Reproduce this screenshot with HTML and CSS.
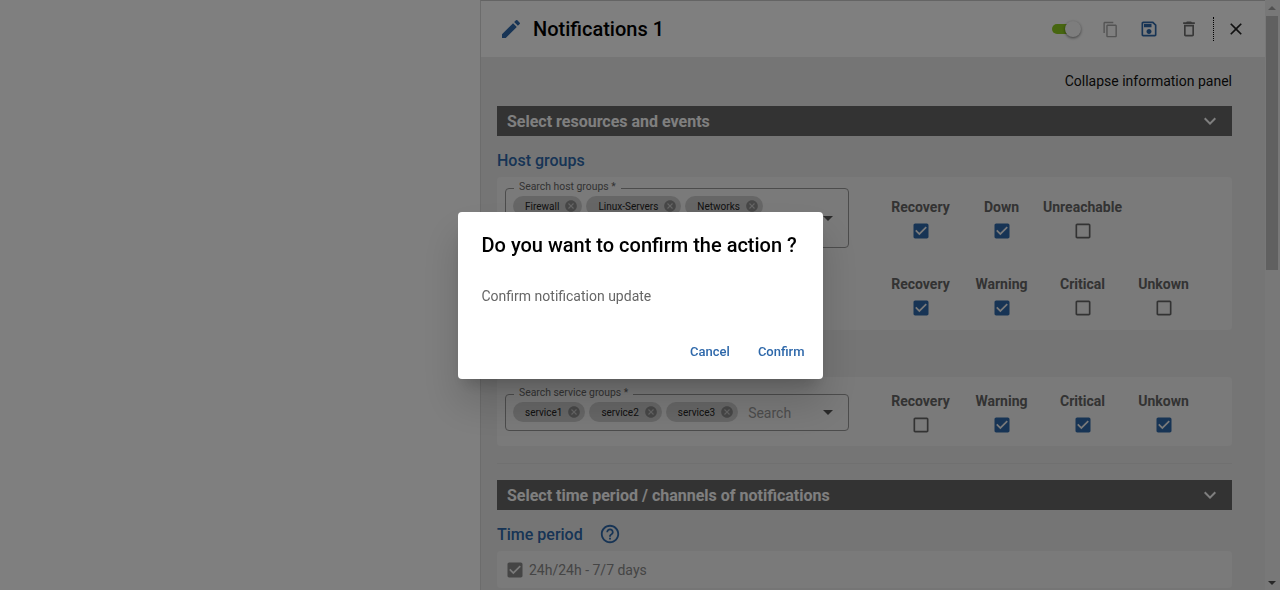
FILE: index.html
```html
<!DOCTYPE html>
<html lang="en">
<head>
    <meta charset="UTF-8">
    <meta name="viewport" content="width=device-width, initial-scale=1.0">
    <title>Notifications</title>
    <link rel="stylesheet" href="styles.css">
</head>
<body>
    <svg class="icon-defs" aria-hidden="true">
        <symbol id="i-edit" viewBox="0 0 24 24"><path d="M3 17.25V21h3.75L17.81 9.94l-3.75-3.75L3 17.25zM20.71 7.04a1 1 0 0 0 0-1.41l-2.34-2.34a1 1 0 0 0-1.41 0l-1.83 1.83 3.75 3.75 1.83-1.83z"/></symbol>
        <symbol id="i-copy" viewBox="0 0 24 24"><path d="M16 1H4c-1.1 0-2 .9-2 2v14h2V3h12V1zm3 4H8c-1.1 0-2 .9-2 2v14c0 1.1.9 2 2 2h11c1.1 0 2-.9 2-2V7c0-1.1-.9-2-2-2zm0 16H8V7h11v14z"/></symbol>
        <symbol id="i-save" viewBox="0 0 24 24"><path d="M17 3H5c-1.11 0-2 .9-2 2v14c0 1.1.89 2 2 2h14c1.1 0 2-.9 2-2V7l-4-4zm2 16H5V5h11.17L19 7.83V19zm-7-7c-1.66 0-3 1.34-3 3s1.34 3 3 3 3-1.34 3-3-1.34-3-3-3zM6 6h9v4H6z"/></symbol>
        <symbol id="i-delete" viewBox="0 0 24 24"><path d="M6 19c0 1.1.9 2 2 2h8c1.1 0 2-.9 2-2V7H6v12zM8 9h8v10H8V9zm7.5-5l-1-1h-5l-1 1H5v2h14V4z"/></symbol>
        <symbol id="i-close" viewBox="0 0 24 24"><path d="M19 6.41L17.59 5 12 10.59 6.41 5 5 6.41 10.59 12 5 17.59 6.41 19 12 13.41 17.59 19 19 17.59 13.41 12z"/></symbol>
        <symbol id="i-chevron" viewBox="0 0 24 24"><path d="M7.41 8.59L12 13.17l4.59-4.58L18 10l-6 6-6-6 1.41-1.41z"/></symbol>
        <symbol id="i-help" viewBox="0 0 24 24"><path d="M11 18h2v-2h-2v2zm1-16C6.48 2 2 6.48 2 12s4.48 10 10 10 10-4.48 10-10S17.52 2 12 2zm0 18c-4.41 0-8-3.59-8-8s3.59-8 8-8 8 3.59 8 8-3.59 8-8 8zm0-14c-2.21 0-4 1.79-4 4h2c0-1.1.9-2 2-2s2 .9 2 2c0 2-3 1.75-3 5h2c0-2.25 3-2.5 3-5 0-2.21-1.79-4-4-4z"/></symbol>
        <symbol id="i-checked" viewBox="0 0 24 24"><path d="M19 3H5c-1.11 0-2 .9-2 2v14c0 1.1.89 2 2 2h14c1.11 0 2-.9 2-2V5c0-1.1-.89-2-2-2zm-9 14l-5-5 1.41-1.41L10 14.17l7.59-7.59L19 8l-9 9z"/></symbol>
        <symbol id="i-blank" viewBox="0 0 24 24"><path d="M19 5v14H5V5h14m0-2H5c-1.1 0-2 .9-2 2v14c0 1.1.9 2 2 2h14c1.1 0 2-.9 2-2V5c0-1.1-.9-2-2-2z"/></symbol>
        <symbol id="i-cancel" viewBox="0 0 24 24"><path d="M12 2C6.47 2 2 6.47 2 12s4.47 10 10 10 10-4.47 10-10S17.53 2 12 2zm5 13.59L15.59 17 12 13.41 8.41 17 7 15.59 10.59 12 7 8.41 8.41 7 12 10.59 15.59 7 17 8.41 13.41 12 17 15.59z"/></symbol>
    </svg>

    <div class="page">
        <div class="left-space"></div>
        <div class="panel">
            <header class="panel-header">
                <svg class="icon title-icon"><use href="#i-edit"/></svg>
                <h1 class="panel-title">Notifications 1</h1>
                <div class="switch"><span class="switch-track"></span><span class="switch-thumb"></span></div>
                <svg class="icon action copy"><use href="#i-copy"/></svg>
                <svg class="icon action save"><use href="#i-save"/></svg>
                <svg class="icon action trash"><use href="#i-delete"/></svg>
                <span class="divider"></span>
                <svg class="icon close"><use href="#i-close"/></svg>
            </header>

            <div class="panel-body">
                <p class="collapse-link">Collapse information panel</p>

                <div class="section-bar">
                    <span>Select resources and events</span>
                    <svg class="icon chevron"><use href="#i-chevron"/></svg>
                </div>

                <h2 class="group-title">Host groups</h2>
                <div class="card card-hosts">
                    <div class="field field-tall">
                        <span class="field-legend">Search host groups *</span>
                        <div class="chips">
                            <span class="chip">Firewall<svg class="chip-x"><use href="#i-cancel"/></svg></span>
                            <span class="chip">Linux-Servers<svg class="chip-x"><use href="#i-cancel"/></svg></span>
                            <span class="chip">Networks<svg class="chip-x"><use href="#i-cancel"/></svg></span>
                        </div>
                        <span class="caret"></span>
                    </div>
                    <div class="events">
                        <div class="event-grid first-row">
                            <div class="event"><span>Recovery</span><svg class="check on"><use href="#i-checked"/></svg></div>
                            <div class="event"><span>Down</span><svg class="check on"><use href="#i-checked"/></svg></div>
                            <div class="event"><span>Unreachable</span><svg class="check"><use href="#i-blank"/></svg></div>
                        </div>
                        <div class="event-grid">
                            <div class="event"><span>Recovery</span><svg class="check on"><use href="#i-checked"/></svg></div>
                            <div class="event"><span>Warning</span><svg class="check on"><use href="#i-checked"/></svg></div>
                            <div class="event"><span>Critical</span><svg class="check"><use href="#i-blank"/></svg></div>
                            <div class="event"><span>Unkown</span><svg class="check"><use href="#i-blank"/></svg></div>
                        </div>
                    </div>
                </div>

                <h2 class="group-title service-title">Service groups</h2>
                <div class="card card-services">
                    <div class="field">
                        <span class="field-legend">Search service groups *</span>
                        <div class="chips">
                            <span class="chip">service1<svg class="chip-x"><use href="#i-cancel"/></svg></span>
                            <span class="chip">service2<svg class="chip-x"><use href="#i-cancel"/></svg></span>
                            <span class="chip">service3<svg class="chip-x"><use href="#i-cancel"/></svg></span>
                            <span class="field-placeholder">Search</span>
                        </div>
                        <span class="caret"></span>
                    </div>
                    <div class="events">
                        <div class="event-grid">
                            <div class="event"><span>Recovery</span><svg class="check"><use href="#i-blank"/></svg></div>
                            <div class="event"><span>Warning</span><svg class="check on"><use href="#i-checked"/></svg></div>
                            <div class="event"><span>Critical</span><svg class="check on"><use href="#i-checked"/></svg></div>
                            <div class="event"><span>Unkown</span><svg class="check on"><use href="#i-checked"/></svg></div>
                        </div>
                    </div>
                </div>

                <hr class="rule">

                <div class="section-bar">
                    <span>Select time period / channels of notifications</span>
                    <svg class="icon chevron"><use href="#i-chevron"/></svg>
                </div>

                <h2 class="group-title">Time period <svg class="icon help"><use href="#i-help"/></svg></h2>
                <div class="card card-time">
                    <svg class="check grey"><use href="#i-checked"/></svg>
                    <span>24h/24h - 7/7 days</span>
                </div>
            </div>
        </div>
        <div class="scrollbar">
            <span class="arrow-up"></span>
            <span class="scroll-thumb"></span>
            <span class="arrow-down"></span>
        </div>
    </div>

    <div class="backdrop">
        <div class="dialog">
            <h3 class="dialog-title">Do you want to confirm the action ?</h3>
            <p class="dialog-text">Confirm notification update</p>
            <div class="dialog-actions">
                <button type="button">Cancel</button>
                <button type="button">Confirm</button>
            </div>
        </div>
    </div>
</body>
</html>
```
FILE: styles.css
```css
* {
    box-sizing: border-box;
}

body {
    margin: 0;
    height: 590px;
    overflow: hidden;
    font-family: Roboto, "Liberation Sans", sans-serif;
    background-color: #fff;
}

.icon-defs {
    display: none;
}

.page {
    display: flex;
    height: 590px;
}

.left-space {
    width: 480px;
    flex: none;
}

.panel {
    flex: 1;
    min-width: 0;
    border-left: 1px solid #d8d8d8;
    border-top: 1px solid #c8c8c8;
    overflow: hidden;
    background-color: #ebebeb;
}

.panel-header {
    display: flex;
    align-items: center;
    height: 56px;
    padding-left: 18px;
    background-color: #fff;
}

.icon {
    width: 24px;
    height: 24px;
    flex: none;
    fill: currentColor;
}

.title-icon {
    color: #2e68aa;
}

.panel-title {
    flex: 1;
    margin: 0 0 0 10px;
    font-size: 20px;
    font-weight: 500;
    color: #000;
}

.switch {
    position: relative;
    width: 30px;
    height: 16px;
    flex: none;
    margin-right: 20px;
}

.switch-track {
    position: absolute;
    left: 0;
    top: 3px;
    width: 24px;
    height: 10px;
    border-radius: 5px;
    background-color: #8fcc20;
}

.switch-thumb {
    position: absolute;
    left: 13px;
    top: 0;
    width: 16px;
    height: 16px;
    border-radius: 50%;
    background-color: #fafafa;
    box-shadow: 0 1px 3px rgba(0, 0, 0, 0.5);
}

.action {
    width: 20px;
    height: 20px;
    margin-right: 20px;
}

.copy {
    width: 17px;
    height: 17px;
    color: #a8a8a8;
}

.save {
    color: #2e68aa;
}

.trash {
    color: #707070;
}

.divider {
    width: 0;
    height: 24px;
    margin-left: -6px;
    border-left: 1px dotted #000;
}

.close {
    width: 20px;
    height: 20px;
    margin: 0 19px 0 12px;
    color: #222;
}

.panel-body {
    padding: 0 33px 0 16px;
}

.collapse-link {
    margin: 0;
    padding-top: 16px;
    height: 49px;
    font-size: 14px;
    line-height: 16px;
    text-align: right;
    color: #111;
}

.section-bar {
    display: flex;
    align-items: center;
    justify-content: space-between;
    height: 30px;
    padding: 0 10px;
    font-size: 16px;
    font-weight: 700;
    color: #fff;
    background-color: #666;
}

.chevron {
    color: #fff;
}

.group-title {
    display: flex;
    align-items: center;
    margin: 0;
    height: 41px;
    padding-top: 7px;
    font-size: 16px;
    font-weight: 500;
    color: #2e68aa;
}

.service-title {
    height: 47px;
}

.card {
    display: flex;
    border-radius: 4px;
    background-color: #f4f4f4;
}

.card-hosts {
    height: 153px;
}

.card-services {
    height: 69px;
}

.field {
    position: relative;
    width: 344px;
    height: 37px;
    flex: none;
    margin: 17px 0 0 8px;
    padding: 7px 0 0 7px;
    border: 1px solid #999;
    border-radius: 4px;
}

.field-tall {
    height: 60px;
    margin-top: 11px;
}

.field-legend {
    position: absolute;
    left: 8px;
    top: -8px;
    padding: 0 5px;
    font-size: 10.4px;
    line-height: 12px;
    color: #666;
    background-color: #f4f4f4;
}

.chips {
    display: flex;
    align-items: center;
    gap: 4px;
}

.chip {
    display: flex;
    align-items: center;
    height: 20px;
    padding: 0 4px 0 12px;
    border-radius: 10px;
    font-size: 10px;
    color: #222;
    background-color: #cdcdcd;
}

.chip-x {
    width: 14px;
    height: 14px;
    margin-left: 5px;
    fill: #8f8f8f;
}

.field-placeholder {
    margin: 1px 0 0 6px;
    font-size: 14px;
    color: #9a9a9a;
}

.caret {
    position: absolute;
    right: 15px;
    top: 15px;
    width: 0;
    height: 0;
    border-left: 5px solid transparent;
    border-right: 5px solid transparent;
    border-top: 5px solid #555;
}

.field-tall .caret {
    top: 27px;
}

.events {
    margin-left: 31px;
}

.event-grid {
    display: grid;
    grid-template-columns: repeat(4, 81px);
    padding-top: 15px;
}

.first-row {
    padding-top: 21px;
    height: 83px;
}

.event {
    display: flex;
    flex-direction: column;
    align-items: center;
    font-size: 14px;
    font-weight: 700;
    line-height: 18px;
    color: #666;
}

.check {
    width: 20px;
    height: 20px;
    margin-top: 5px;
    fill: #666;
}

.check.on {
    fill: #2e68aa;
}

.rule {
    margin: 17px 0 16px;
    border: 0;
    border-top: 1px solid #e0e0e0;
}

.help {
    width: 22px;
    height: 22px;
    margin-left: 16px;
}

.card-time {
    align-items: center;
    gap: 4px;
    height: 37px;
    padding: 0 0 0 8px;
    font-size: 14px;
    color: #8a8a8a;
}

.check.grey {
    margin: 0;
    fill: #8a8a8a;
}

.scrollbar {
    position: relative;
    width: 15px;
    flex: none;
    background-color: #f1f1f1;
}

.scroll-thumb {
    position: absolute;
    left: 1px;
    right: 2px;
    top: 16px;
    height: 254px;
    background-color: #c1c1c1;
}

.arrow-up,
.arrow-down {
    position: absolute;
    left: 3px;
    width: 0;
    height: 0;
    border-left: 4px solid transparent;
    border-right: 4px solid transparent;
}

.arrow-up {
    top: 6px;
    border-bottom: 4px solid #a3a3a3;
}

.arrow-down {
    bottom: 5px;
    border-top: 4px solid #505050;
}

.backdrop {
    position: fixed;
    inset: 0;
    display: flex;
    align-items: center;
    justify-content: center;
    background-color: rgba(0, 0, 0, 0.5);
}

.dialog {
    width: 365px;
    height: 167px;
    border-radius: 4px;
    padding: 0 10px 0 24px;
    background-color: #fff;
    box-shadow: 0 11px 15px -7px rgba(0, 0, 0, 0.2), 0 24px 38px 3px rgba(0, 0, 0, 0.14);
}

.dialog-title {
    margin: 0;
    padding-top: 21px;
    font-size: 20px;
    line-height: 24px;
    font-weight: 500;
    color: #000;
}

.dialog-text {
    margin: 0;
    padding-top: 29px;
    font-size: 14px;
    line-height: 20px;
    color: #666;
}

.dialog-actions {
    display: flex;
    justify-content: flex-end;
    gap: 12px;
    margin-top: 30px;
}

.dialog-actions button {
    padding: 6px 8px;
    border: 0;
    background: none;
    font-family: inherit;
    font-size: 13px;
    line-height: 20px;
    font-weight: 500;
    color: #2e68aa;
    cursor: pointer;
}
```
